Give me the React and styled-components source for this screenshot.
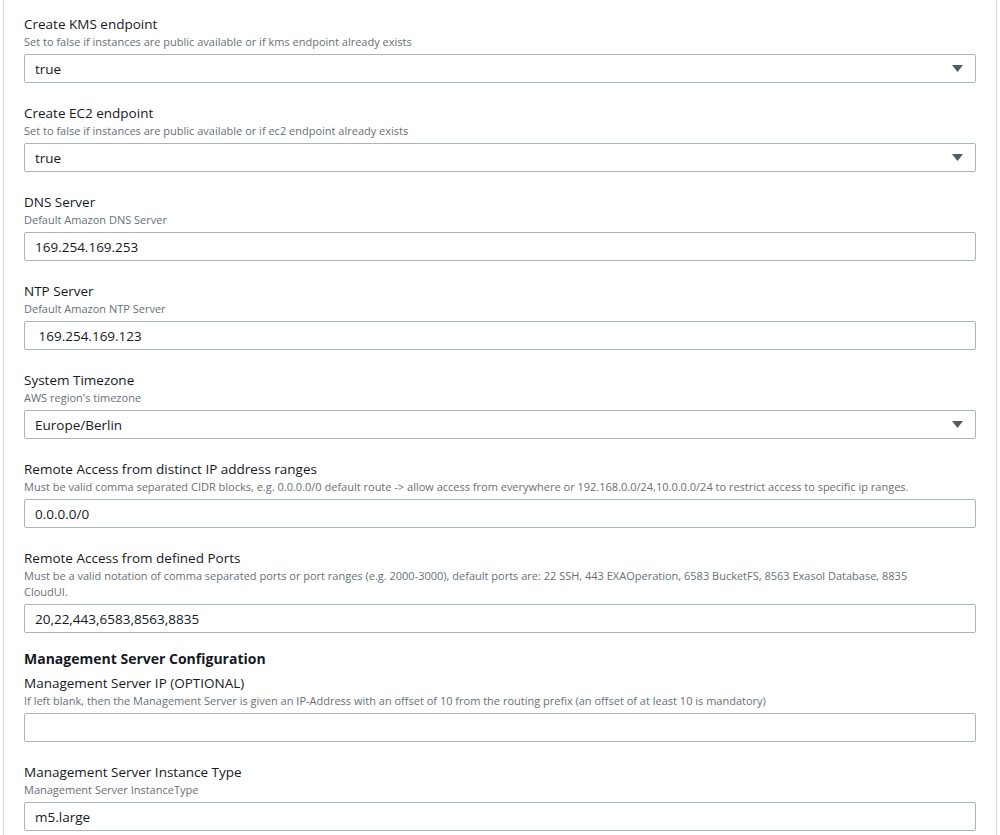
import React from "react";
import styled, { createGlobalStyle } from "styled-components";

const Global = createGlobalStyle`
  html, body { margin: 0; padding: 0; background: #fff; }
  body { font-family: "Open Sans", "Noto Sans", "Liberation Sans", sans-serif; color: #16191f; }
  * { box-sizing: border-box; }
`;

const Panel = styled.div`
  margin: 0 3px;
  width: 994px;
  min-height: 835px;
  border-left: 1px solid #d5dbdb;
  border-right: 1px solid #d5dbdb;
  padding: 14px 20px 0 20px;
  display: flex;
  flex-direction: column;
`;

const Field = styled.div`
  display: flex;
  flex-direction: column;
  margin-bottom: ${(p) => p.$gap ?? 20}px;
`;

const Label = styled.div`
  font-size: 13.5px;
  line-height: 20px;
  color: #16191f;
`;

const Desc = styled.div`
  font-size: 11px;
  line-height: 16px;
  color: #687078;
`;

const Heading = styled.div`
  font-size: 14px;
  font-weight: 700;
  line-height: 22px;
  color: #16191f;
  margin-bottom: 3px;
`;

const Box = styled.div`
  margin-top: 4px;
  height: 29px;
  border: 1px solid #aab7b8;
  border-radius: 2px;
  background: #fff;
  display: flex;
  align-items: center;
  padding: 0 10px;
  font-size: 13.5px;
  color: #16191f;
  white-space: pre;
`;

const Arrow = styled.svg`
  margin-left: auto;
  margin-right: 2px;
  width: 11px;
  height: 7px;
`;

function Select({ value }) {
  return (
    <Box>
      {value}
      <Arrow viewBox="0 0 11 7">
        <path d="M0 0 H11 L5.5 7 Z" fill="#545b64" />
      </Arrow>
    </Box>
  );
}

function Input({ value }) {
  return <Box>{value}</Box>;
}

export default function App() {
  return (
    <>
      <Global />
      <Panel>
        <Field>
          <Label>Create KMS endpoint</Label>
          <Desc>Set to false if instances are public available or if kms endpoint already exists</Desc>
          <Select value="true" />
        </Field>
        <Field>
          <Label>Create EC2 endpoint</Label>
          <Desc>Set to false if instances are public available or if ec2 endpoint already exists</Desc>
          <Select value="true" />
        </Field>
        <Field>
          <Label>DNS Server</Label>
          <Desc>Default Amazon DNS Server</Desc>
          <Input value="169.254.169.253" />
        </Field>
        <Field>
          <Label>NTP Server</Label>
          <Desc>Default Amazon NTP Server</Desc>
          <Input value=" 169.254.169.123" />
        </Field>
        <Field>
          <Label>System Timezone</Label>
          <Desc>AWS region's timezone</Desc>
          <Select value="Europe/Berlin" />
        </Field>
        <Field>
          <Label>Remote Access from distinct IP address ranges</Label>
          <Desc>
            Must be valid comma separated CIDR blocks, e.g. 0.0.0.0/0 default route -&gt; allow access from everywhere or
            192.168.0.0/24,10.0.0.0/24 to restrict access to specific ip ranges.
          </Desc>
          <Input value="0.0.0.0/0" />
        </Field>
        <Field $gap={15}>
          <Label>Remote Access from defined Ports</Label>
          <Desc>
            Must be a valid notation of comma separated ports or port ranges (e.g. 2000-3000), default ports are: 22 SSH,
            443 EXAOperation, 6583 BucketFS, 8563 Exasol Database, 8835
            <br />
            CloudUI.
          </Desc>
          <Input value="20,22,443,6583,8563,8835" />
        </Field>
        <Heading>Management Server Configuration</Heading>
        <Field>
          <Label>Management Server IP (OPTIONAL)</Label>
          <Desc>
            If left blank, then the Management Server is given an IP-Address with an offset of 10 from the routing prefix
            (an offset of at least 10 is mandatory)
          </Desc>
          <Input value="" />
        </Field>
        <Field>
          <Label>Management Server Instance Type</Label>
          <Desc>Management Server InstanceType</Desc>
          <Input value="m5.large" />
        </Field>
      </Panel>
    </>
  );
}
